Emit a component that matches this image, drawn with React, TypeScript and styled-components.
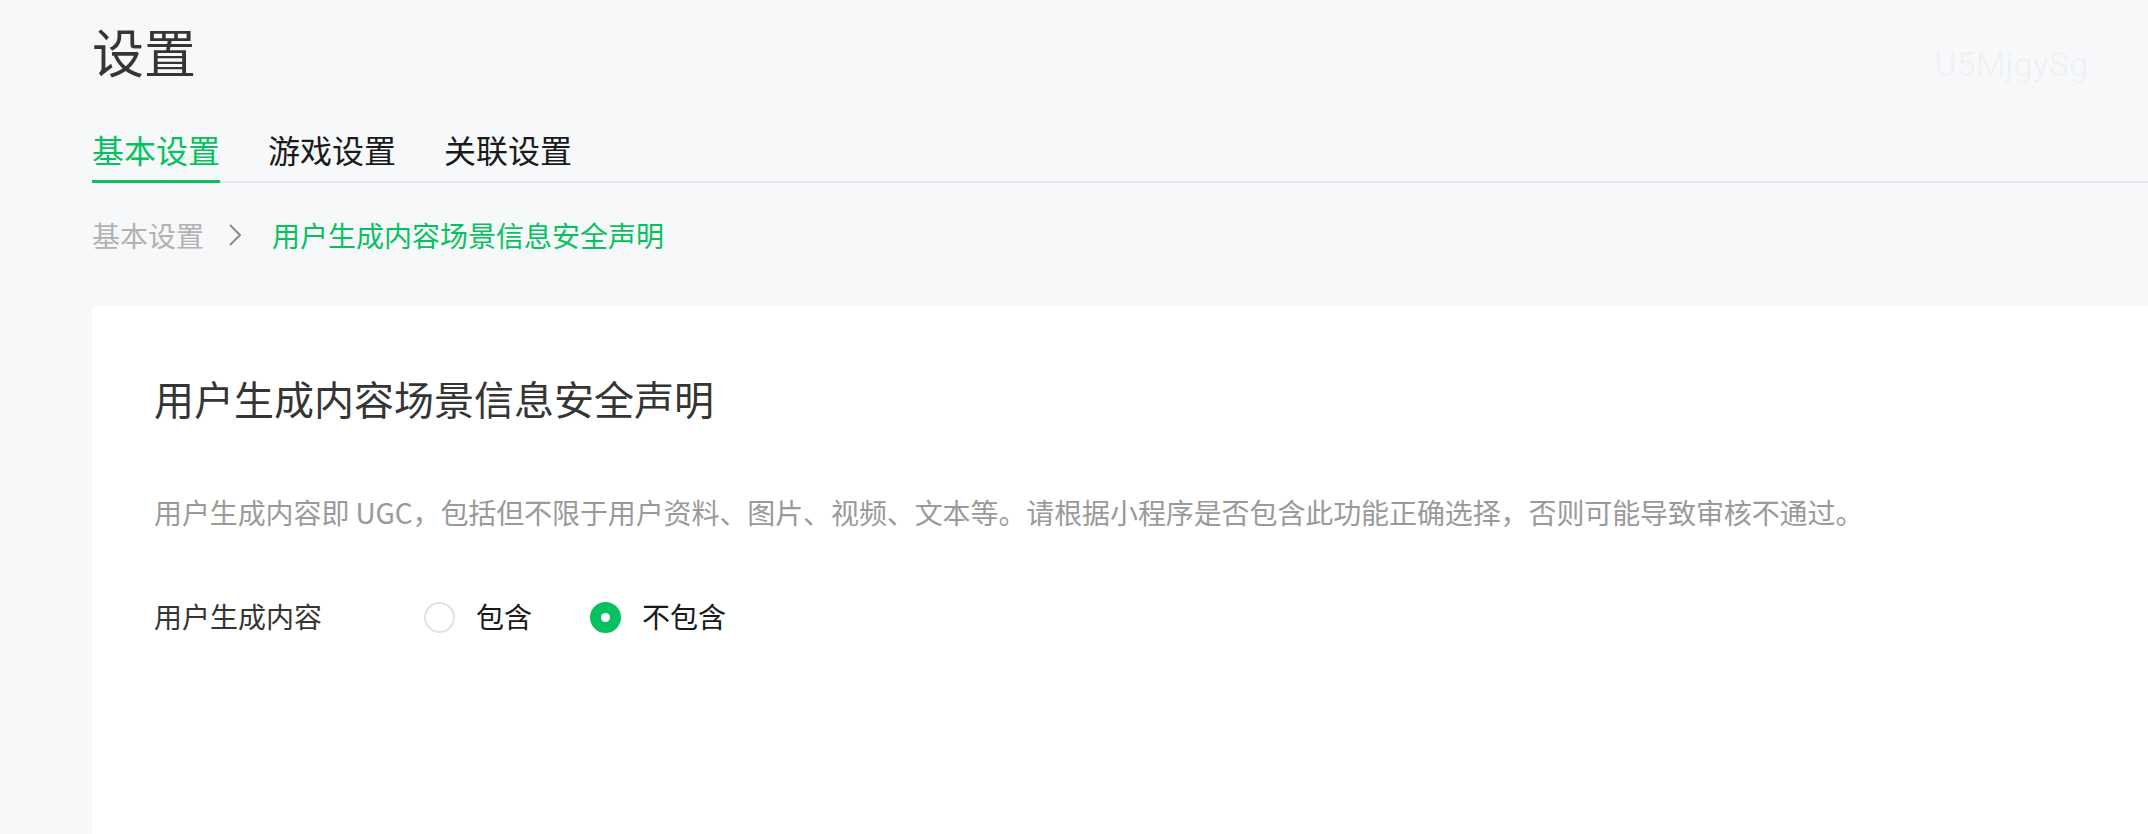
import styled, { createGlobalStyle } from "styled-components";
import { useState } from "react";

const GlobalStyle = createGlobalStyle`
  html, body {
    margin: 0;
    padding: 0;
    background: #f7f8fa;
  }
  body {
    font-family: "Noto Sans CJK SC", "Noto Sans", "Liberation Sans", sans-serif;
    color: #353535;
  }
`;

const Page = styled.div`
  position: relative;
  height: 834px;
  overflow: hidden;
  padding-left: 92px;
  box-sizing: border-box;
`;

const PageTitle = styled.h1`
  margin: 15px 0 0;
  font-size: 52px;
  line-height: 72px;
  font-weight: 400;
  color: #353535;
`;

const TabBar = styled.div`
  display: flex;
  gap: 48px;
  margin-top: 40px;
  border-bottom: 2px solid #e4e5e8;
`;

const Tab = styled.div<{ $active?: boolean }>`
  font-size: 32px;
  line-height: 44px;
  padding-bottom: 9px;
  margin-bottom: -2px;
  border-bottom: 3px solid ${(p) => (p.$active ? "#07c160" : "transparent")};
  color: ${(p) => (p.$active ? "#07c160" : "#1a1a1a")};
  cursor: pointer;
`;

const Breadcrumb = styled.div`
  display: flex;
  align-items: center;
  margin-top: 32px;
  font-size: 28px;
  line-height: 40px;
`;

const Crumb = styled.span<{ $current?: boolean }>`
  color: ${(p) => (p.$current ? "#07c160" : "#b2b2b2")};
`;

const Chevron = styled.svg`
  width: 12px;
  height: 22px;
  margin: 0 31px 0 25px;
`;

const Card = styled.section`
  margin-top: 50px;
  background: #fff;
  border-top-left-radius: 6px;
  padding: 65px 62px 400px;
`;

const CardTitle = styled.h2`
  margin: 0;
  font-size: 40px;
  line-height: 56px;
  font-weight: 400;
  color: #353535;
`;

const Desc = styled.p`
  margin: 66px 0 0;
  font-size: 28px;
  line-height: 40px;
  letter-spacing: -0.1px;
  color: #9a9a9a;
`;

const FormRow = styled.div`
  display: flex;
  align-items: center;
  margin-top: 64px;
  font-size: 28px;
  line-height: 40px;
`;

const FormLabel = styled.div`
  width: 270px;
  flex-shrink: 0;
  color: #353535;
`;

const Options = styled.div`
  display: flex;
  align-items: center;
  gap: 58px;
`;

const Option = styled.label`
  display: flex;
  align-items: center;
  gap: 21px;
  color: #1a1a1a;
  cursor: pointer;
`;

const RadioDot = styled.span<{ $checked?: boolean }>`
  width: 31px;
  height: 31px;
  box-sizing: border-box;
  border-radius: 50%;
  border: 2px solid ${(p) => (p.$checked ? "#07c160" : "#e2e2e2")};
  background: ${(p) => (p.$checked ? "#07c160" : "#fff")};
  display: flex;
  align-items: center;
  justify-content: center;
  margin-top: 2px;

  &::after {
    content: "";
    width: 9px;
    height: 9px;
    border-radius: 50%;
    background: #fff;
    display: ${(p) => (p.$checked ? "block" : "none")};
  }
`;

const Watermark = styled.span<{ $rotate?: number; $strong?: boolean }>`
  position: absolute;
  font-family: "Roboto", "Liberation Sans", sans-serif;
  font-size: 34px;
  line-height: 40px;
  color: ${(p) => (p.$strong ? "rgba(0, 0, 0, 0.04)" : "rgba(0, 0, 0, 0.022)")};
  white-space: nowrap;
  pointer-events: none;
  user-select: none;
  transform: rotate(${(p) => p.$rotate ?? 0}deg);
  transform-origin: left bottom;
`;

const MARK = "U5MjgySg";

const tiles: { x: number; y: number }[] = [];
for (let r = 0; r < 4; r++) {
  for (let c = 0; c < 5; c++) {
    tiles.push({ x: 90 + c * 411, y: 160 + r * 200 });
  }
}

export default function App() {
  const [ugc, setUgc] = useState<"yes" | "no">("no");

  return (
    <>
      <GlobalStyle />
      <Page>
        <PageTitle>设置</PageTitle>
        <TabBar>
          <Tab $active>基本设置</Tab>
          <Tab>游戏设置</Tab>
          <Tab>关联设置</Tab>
        </TabBar>
        <Breadcrumb>
          <Crumb>基本设置</Crumb>
          <Chevron viewBox="0 0 12 22">
            <path d="M1 1l10 10L1 21" fill="none" stroke="#8c8c8c" strokeWidth="2" />
          </Chevron>
          <Crumb $current>用户生成内容场景信息安全声明</Crumb>
        </Breadcrumb>
        <Card>
          <CardTitle>用户生成内容场景信息安全声明</CardTitle>
          <Desc>
            用户生成内容即 UGC，包括但不限于用户资料、图片、视频、文本等。请根据小程序是否包含此功能正确选择，否则可能导致审核不通过。
          </Desc>
          <FormRow>
            <FormLabel>用户生成内容</FormLabel>
            <Options>
              <Option onClick={() => setUgc("yes")}>
                <RadioDot $checked={ugc === "yes"} />
                包含
              </Option>
              <Option onClick={() => setUgc("no")}>
                <RadioDot $checked={ugc === "no"} />
                不包含
              </Option>
            </Options>
          </FormRow>
        </Card>

        {tiles.map((t, i) => (
          <Watermark key={i} $rotate={-60} style={{ left: t.x, top: t.y }}>
            {MARK}
          </Watermark>
        ))}
        <Watermark $strong style={{ right: 60, top: 44 }}>
          {MARK}
        </Watermark>
        <Watermark style={{ left: 219, top: 716 }}>{MARK}</Watermark>
      </Page>
    </>
  );
}
